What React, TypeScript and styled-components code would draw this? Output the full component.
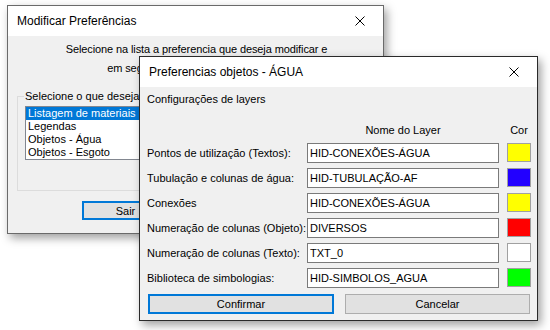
import React from "react";
import styled, { createGlobalStyle } from "styled-components";

const GlobalStyle = createGlobalStyle`
  html, body {
    margin: 0;
    padding: 0;
    background: #ffffff;
  }
  body {
    font-family: "Liberation Sans", Arial, sans-serif;
    font-size: 11px;
    color: #000000;
  }
`;

const Desktop = styled.div`
  position: relative;
  width: 550px;
  height: 330px;
  overflow: hidden;
  background: #ffffff;
`;

const Window = styled.div<{ $left: number; $top: number; $width: number; $height: number; $active?: boolean }>`
  position: absolute;
  left: ${(p) => p.$left}px;
  top: ${(p) => p.$top}px;
  width: ${(p) => p.$width}px;
  height: ${(p) => p.$height}px;
  box-sizing: border-box;
  border: 1px solid ${(p) => (p.$active ? "#2a2a2a" : "#6a6a6a")};
  background: #f0f0f0;
  display: flex;
  flex-direction: column;
  box-shadow: 3px 4px 9px rgba(0, 0, 0, 0.38);
`;

const TitleBar = styled.div`
  height: 30px;
  flex: none;
  background: #ffffff;
  display: flex;
  align-items: center;
  justify-content: space-between;
  padding: 0 0 0 9px;
`;

const TitleText = styled.span`
  font-family: "Liberation Sans", Arial, sans-serif;
  font-size: 12px;
  color: #000000;
`;

const CloseButton = styled.div`
  width: 46px;
  height: 30px;
  display: flex;
  align-items: center;
  justify-content: center;
`;

const CloseIcon = () => (
  <svg width="10" height="10" viewBox="0 0 10 10">
    <path d="M0.5 0.5 L9.5 9.5 M9.5 0.5 L0.5 9.5" stroke="#000" strokeWidth="1" fill="none" />
  </svg>
);

/* ---------- back window ---------- */

const BackBody = styled.div`
  flex: 1;
  display: flex;
  flex-direction: column;
  padding: 4px 9px 0 9px;
`;

const Intro = styled.p`
  margin: 0;
  text-align: center;
  line-height: 19px;
  padding-left: 2px;
  letter-spacing: -0.1px;
`;

const GroupBox = styled.fieldset`
  margin: 12px 0 0 0;
  padding: 3px 7px 0 7px;
  height: 101px;
  box-sizing: border-box;
  border: 1px solid #dcdcdc;
  border-radius: 0;

  legend {
    padding: 0 1px;
    margin-left: -1px;
    line-height: 13px;
  }
`;

const ListBox = styled.ul`
  list-style: none;
  margin: 0;
  padding: 0;
  width: 340px;
  height: 54px;
  box-sizing: border-box;
  border: 1px solid #828790;
  background: #ffffff;
  overflow: hidden;
`;

const ListItem = styled.li<{ $selected?: boolean }>`
  height: 13px;
  line-height: 13px;
  padding-left: 2px;
  font-size: 11px;
  background: ${(p) => (p.$selected ? "#0078d7" : "transparent")};
  color: ${(p) => (p.$selected ? "#ffffff" : "#000000")};
`;

const BackButtons = styled.div`
  display: flex;
  justify-content: center;
  gap: 50px;
  margin-top: 10px;
  padding-right: 2px;
`;

const Button = styled.button<{ $default?: boolean; $width: number }>`
  width: ${(p) => p.$width}px;
  height: 19px;
  box-sizing: border-box;
  margin: 0;
  padding: 0;
  font-family: "Liberation Sans", Arial, sans-serif;
  font-size: 11px;
  color: #000000;
  background: #e1e1e1;
  border: ${(p) => (p.$default ? "2px solid #0078d7" : "1px solid #adadad")};
  border-radius: 0;
`;

/* ---------- front window ---------- */

const FrontBody = styled.div`
  flex: 1;
  display: flex;
  flex-direction: column;
  padding: 5px 6px 0 7px;
`;

const SectionLabel = styled.div`
  line-height: 14px;
`;

const LayerGrid = styled.div`
  display: grid;
  grid-template-columns: 152px 192px 24px;
  column-gap: 8px;
  row-gap: 5px;
  align-items: center;
  margin-top: 18px;
`;

const HeaderCell = styled.div`
  text-align: center;
  line-height: 13px;
  margin-bottom: 1px;
  white-space: nowrap;
`;

const RowLabel = styled.div`
  line-height: 13px;
  white-space: nowrap;
`;

const LayerInput = styled.input`
  width: 192px;
  height: 20px;
  box-sizing: border-box;
  border: 1px solid #7a7a7a;
  background: #ffffff;
  padding: 0 2px;
  margin: 0;
  font-family: "Liberation Sans", Arial, sans-serif;
  font-size: 11px;
  color: #000000;
  outline: none;
`;

const Swatch = styled.div<{ $color: string }>`
  width: 24px;
  height: 19px;
  box-sizing: border-box;
  border: 1px solid #a0a0a0;
  background: ${(p) => p.$color};
  margin-top: -1px;
`;

const FrontButtons = styled.div`
  display: flex;
  gap: 11px;
  margin-top: 6px;
  padding-left: 1px;

  button {
    height: 20px;
  }
`;

const layers = [
  { label: "Pontos de utilização (Textos):", value: "HID-CONEXÕES-ÁGUA", color: "#ffff00" },
  { label: "Tubulação e colunas de água:", value: "HID-TUBULAÇÃO-AF", color: "#2200ff" },
  { label: "Conexões", value: "HID-CONEXÕES-ÁGUA", color: "#ffff00" },
  { label: "Numeração de colunas (Objeto):", value: "DIVERSOS", color: "#ff0000" },
  { label: "Numeração de colunas (Texto):", value: "TXT_0", color: "#ffffff" },
  { label: "Biblioteca de simbologias:", value: "HID-SIMBOLOS_AGUA", color: "#00ff00" },
];

const options = ["Listagem de materiais", "Legendas", "Objetos - Água", "Objetos - Esgoto"];

const App = () => {
  return (
    <Desktop>
      <GlobalStyle />
      <Window $left={7} $top={5} $width={377} $height={229}>
        <TitleBar>
          <TitleText>Modificar Preferências</TitleText>
          <CloseButton>
            <CloseIcon />
          </CloseButton>
        </TitleBar>
        <BackBody>
          <Intro>
            Selecione na lista a preferencia que deseja modificar e
            <br />
            em seguida clique no botão Modificar
          </Intro>
          <GroupBox>
            <legend>Selecione o que deseja modificar</legend>
            <ListBox>
              {options.map((o, i) => (
                <ListItem key={o} $selected={i === 0}>
                  {o}
                </ListItem>
              ))}
            </ListBox>
          </GroupBox>
          <BackButtons>
            <Button $width={88} $default>
              Sair
            </Button>
            <Button $width={88}>Modificar</Button>
          </BackButtons>
        </BackBody>
      </Window>

      <Window $left={139} $top={56} $width={399} $height={265} $active>
        <TitleBar>
          <TitleText>Preferencias objetos - ÁGUA</TitleText>
          <CloseButton>
            <CloseIcon />
          </CloseButton>
        </TitleBar>
        <FrontBody>
          <SectionLabel>Configurações de layers</SectionLabel>
          <LayerGrid>
            <div />
            <HeaderCell>Nome do Layer</HeaderCell>
            <HeaderCell>Cor</HeaderCell>
            {layers.map((l, i) => (
              <React.Fragment key={i}>
                <RowLabel>{l.label}</RowLabel>
                <LayerInput defaultValue={l.value} readOnly />
                <Swatch $color={l.color} />
              </React.Fragment>
            ))}
          </LayerGrid>
          <FrontButtons>
            <Button $width={186} $default>
              Confirmar
            </Button>
            <Button $width={185}>Cancelar</Button>
          </FrontButtons>
        </FrontBody>
      </Window>
    </Desktop>
  );
};

export default App;
